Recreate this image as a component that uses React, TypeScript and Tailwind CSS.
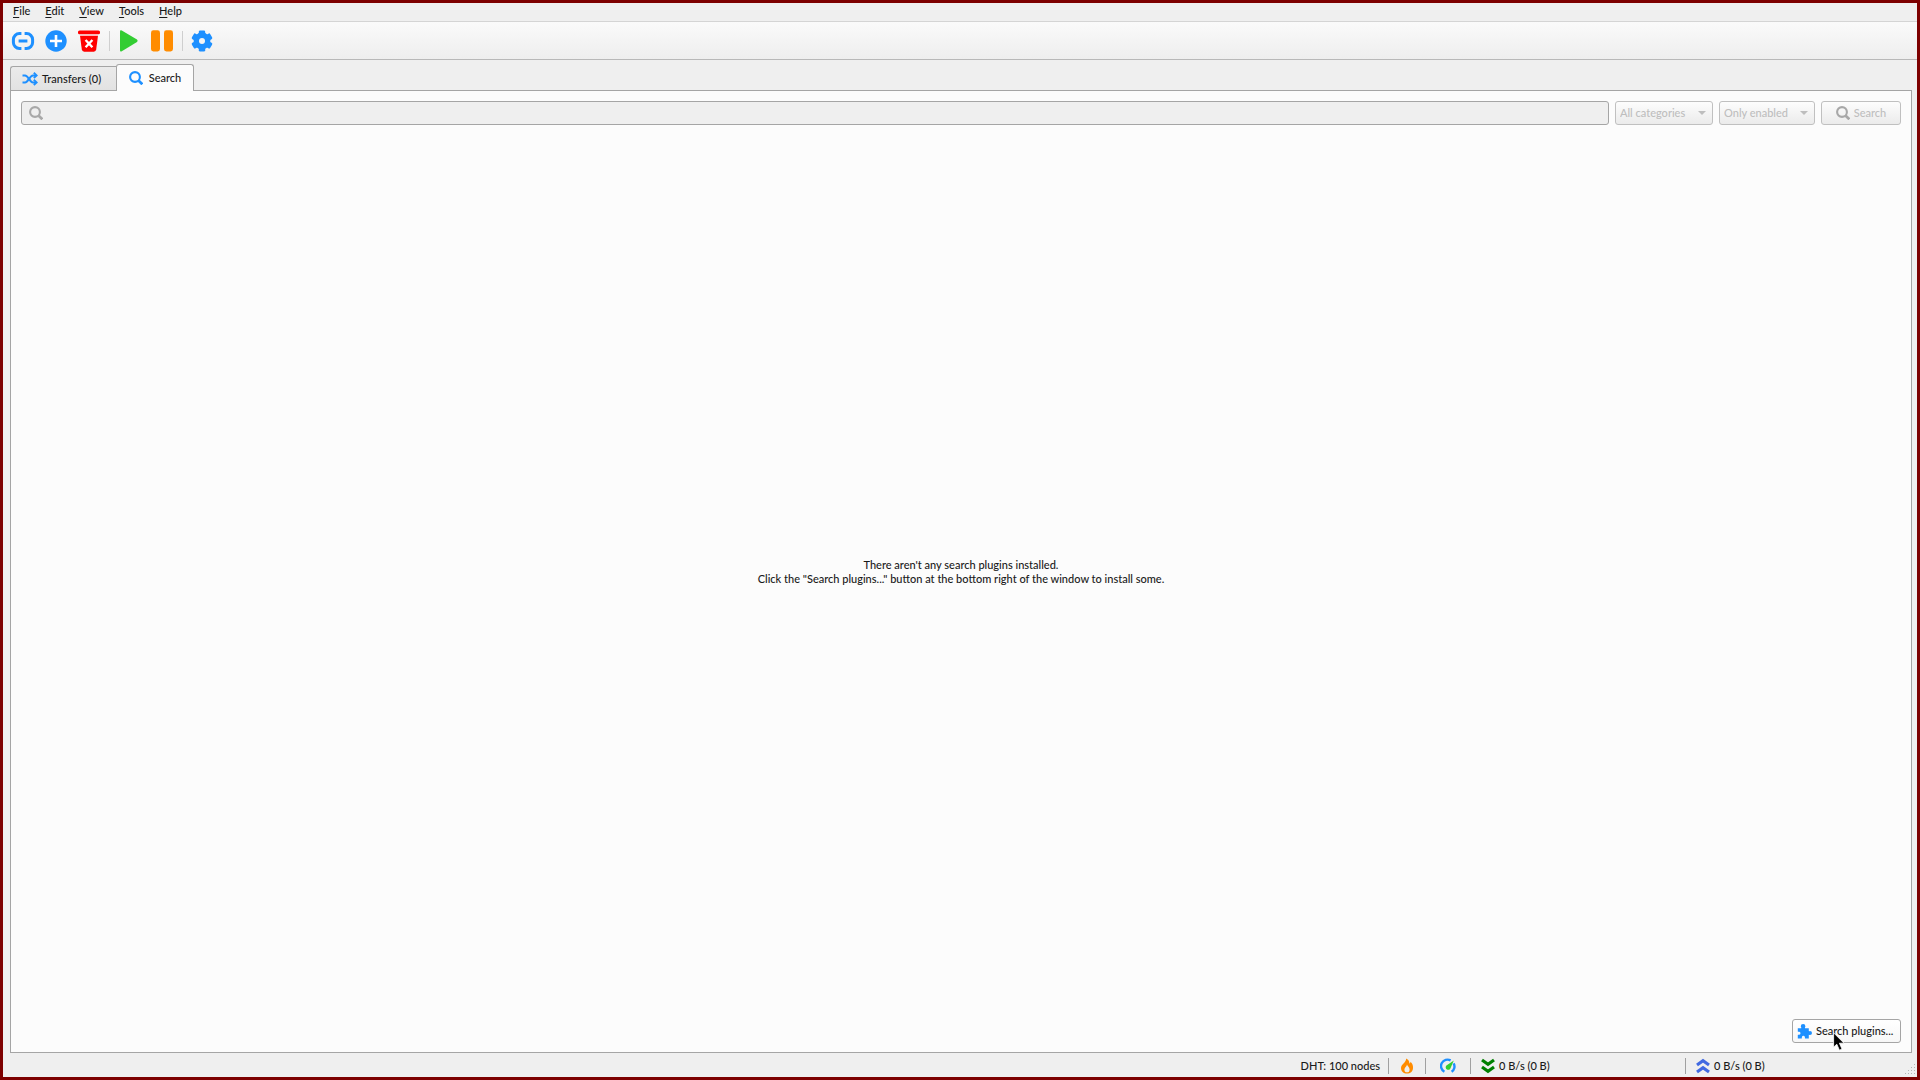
import React from "react";

const menus = ["File", "Edit", "View", "Tools", "Help"];

function SearchIcon({ className }: { className?: string }) {
  return (
    <svg viewBox="0 0 14 14" className={className} fill="none" stroke="currentColor" aria-hidden="true">
      <circle cx="6" cy="6" r="4.9" strokeWidth="2.1" />
      <path d="M9.2 9.2 L13.3 13.3" strokeWidth="2.7" />
    </svg>
  );
}

function LinkIcon() {
  return (
    <svg viewBox="0 0 24 24" className="size-6" fill="none" stroke="#1e90ff" strokeWidth="3" aria-hidden="true">
      <path d="M10.4 4.6 H8.4 A6 6 0 0 0 2.4 10.6 V13.4 A6 6 0 0 0 8.4 19.4 H10.4" />
      <path d="M13.6 4.6 H15.6 A6 6 0 0 1 21.6 10.6 V13.4 A6 6 0 0 1 15.6 19.4 H13.6" />
      <path d="M7.6 12 H16.4" />
    </svg>
  );
}

function AddIcon() {
  return (
    <svg viewBox="0 0 24 24" className="size-6" aria-hidden="true">
      <circle cx="12" cy="12" r="10.7" fill="#1e90ff" />
      <path d="M12 6 V18 M6 12 H18" stroke="#fff" strokeWidth="2.6" />
    </svg>
  );
}

function DeleteIcon() {
  return (
    <svg viewBox="0 0 24 24" className="size-6" aria-hidden="true">
      <rect x="1" y="1.5" width="22" height="3.8" rx="1.6" fill="#f00" />
      <path d="M3 6.8 H21 L19.2 20.6 Q18.9 22.7 16.8 22.7 H7.2 Q5.1 22.7 4.8 20.6 Z" fill="#f00" />
      <path d="M8.6 11 L15.4 18.2 M15.4 11 L8.6 18.2" stroke="#fff" strokeWidth="2.4" />
    </svg>
  );
}

function PlayIcon() {
  return (
    <svg viewBox="0 0 24 24" className="size-6" fill="#32cd32" aria-hidden="true">
      <path d="M3 2.6 Q3 0.6 4.8 1.6 L20 10.6 Q21.4 11.8 20 12.9 L4.8 22.2 Q3 23.2 3 21.2 Z" />
    </svg>
  );
}

function PauseIcon() {
  return (
    <svg viewBox="0 0 24 24" className="size-6" fill="#ff8c00" aria-hidden="true">
      <rect x="1" y="1.3" width="9" height="21.2" rx="2.4" />
      <rect x="14" y="1.3" width="9" height="21.2" rx="2.4" />
    </svg>
  );
}

function GearIcon() {
  return (
    <svg viewBox="0 0 24 24" className="size-6" aria-hidden="true">
      <g fill="#1e90ff">
        <circle cx="12" cy="12" r="8.4" />
        <rect x="8.8" y="1.4" width="6.4" height="21.2" rx="1.4" />
        <rect x="8.8" y="1.4" width="6.4" height="21.2" rx="1.4" transform="rotate(60 12 12)" />
        <rect x="8.8" y="1.4" width="6.4" height="21.2" rx="1.4" transform="rotate(120 12 12)" />
      </g>
      <circle cx="12" cy="12" r="3" fill="#f5f5f5" />
    </svg>
  );
}

function ShuffleIcon() {
  return (
    <svg viewBox="0 0 16 14" className="h-3.5 w-4" fill="none" stroke="#1e90ff" strokeWidth="2" aria-hidden="true">
      <path d="M0.5 3.4 H3 C6.5 3.4 7.5 10.4 11 10.4 H14" />
      <path d="M0.5 10.4 H3 C6.5 10.4 7.5 3.4 11 3.4 H14" />
      <path d="M11.8 0.8 L14.6 3.4 L11.8 6 M11.8 7.8 L14.6 10.4 L11.8 13" strokeWidth="1.9" />
    </svg>
  );
}

function PuzzleIcon() {
  return (
    <svg viewBox="0 0 15 15" className="size-[15px]" fill="#1e90ff" aria-hidden="true">
      <path d="M0.8 4.2 H4.2 C4.6 3.6 3.8 3.1 3.8 2.3 A2.3 2.3 0 0 1 8.4 2.3 C8.4 3.1 7.6 3.6 8 4.2 H11.8 V7 C12.2 7.4 12.5 6.9 13 6.9 A2 2 0 0 1 13 10.9 C12.5 10.9 12.2 10.4 11.8 10.8 V14.6 H8.1 C7.7 14.1 8.1 13.5 7.9 12.9 A1.6 1.6 0 0 0 4.9 12.9 C4.7 13.5 5.1 14.1 4.7 14.6 H0.8 V11 C1.2 10.5 1.8 11 2.3 10.8 A1.6 1.6 0 0 0 2.3 7.7 C1.8 7.5 1.2 8 0.8 7.5 Z" />
    </svg>
  );
}

function FlameIcon() {
  return (
    <svg viewBox="0 0 14 16" className="h-4 w-3.5" aria-hidden="true">
      <path d="M6.2 0.4 C9.4 2 9.3 4.2 9.4 5.6 C10.2 5.2 10.5 4.6 10.5 3.8 C12.6 5.6 13.2 8 13 10.2 C12.7 13.6 10.2 15.6 7 15.6 C3.6 15.6 1 13.4 1 10 C1 6 6 4.8 6.2 0.4 Z" fill="#ff8c00" />
      <path d="M7 6.4 C7.5 8.2 9.6 9.2 9.6 11.4 A2.6 2.9 0 0 1 4.4 11.4 C4.4 9.4 6.8 8.6 7 6.4 Z" fill="#efefef" />
    </svg>
  );
}

function GaugeIcon() {
  return (
    <svg viewBox="0 0 16 16" className="size-4" fill="none" aria-hidden="true">
      <path d="M4.4 13.8 A6.2 6.2 0 0 1 10.6 2.4" stroke="#1e90ff" strokeWidth="2.4" />
      <path d="M13.6 5.4 A6.2 6.2 0 0 1 11.6 13.8" stroke="#1e90ff" strokeWidth="2.4" />
      <path d="M13.8 2.4 L10.6 10 A2.5 2.5 0 1 1 6.4 7.6 Z" fill="#32cd32" />
    </svg>
  );
}

function DoubleChevron({ className }: { className?: string }) {
  return (
    <svg viewBox="0 0 14 16" className={className} fill="none" stroke="currentColor" strokeWidth="3.2" aria-hidden="true">
      <path d="M1 2 L7 6.2 L13 2 M1 9 L7 13.2 L13 9" />
    </svg>
  );
}

function ToolButton({ label, children }: { label: string; children: React.ReactNode }) {
  return (
    <button type="button" aria-label={label} className="flex size-8 items-center justify-center">
      {children}
    </button>
  );
}

function ToolSeparator() {
  return (
    <div className="flex h-5 w-1.5 justify-center">
      <div className="w-px bg-[#cfcfcf]" />
    </div>
  );
}

function Combo({ label, value, className }: { label: string; value: string; className: string }) {
  return (
    <div className={`relative h-6 ${className}`}>
      <select
        disabled
        aria-label={label}
        className="size-full appearance-none rounded-[3px] border border-[#c0c0c0] bg-linear-to-b from-[#fdfdfd] to-[#ebebeb] pl-1 text-[#bebebe] opacity-100"
      >
        <option>{value}</option>
      </select>
      <svg viewBox="0 0 8 4" className="pointer-events-none absolute top-2.5 right-[7px] h-1 w-2" fill="#bebebe" aria-hidden="true">
        <path d="M0 0 H8 L4 4 Z" />
      </svg>
    </div>
  );
}

function ResizeGrip() {
  const dots = [
    [9, 0], [6, 3], [9, 3], [3, 6], [6, 6], [9, 6], [0, 9], [3, 9], [6, 9], [9, 9],
  ];
  return (
    <svg viewBox="0 0 11 11" className="mr-px mb-0.5 size-[11px] self-end" fill="#b4b4b4" aria-hidden="true">
      {dots.map(([x, y]) => (
        <rect key={`${x}-${y}`} x={x} y={y} width="1" height="1" />
      ))}
    </svg>
  );
}

function StatusBar() {
  return (
    <footer className="flex h-6 items-center justify-end pt-px">
      <span className="pr-2">DHT: 100 nodes</span>
      <button type="button" aria-label="Connection status" className="flex h-4 w-[37px] items-center justify-center border-l border-[#a0a0a0]">
        <FlameIcon />
      </button>
      <button type="button" aria-label="Alternative speed limits" className="flex h-4 w-[45px] items-center justify-center border-l border-[#a0a0a0]">
        <GaugeIcon />
      </button>
      <button type="button" className="flex h-4 w-[215px] items-center gap-1 border-l border-[#a0a0a0] pl-2.5">
        <DoubleChevron className="h-4 w-3.5 text-[#008000]" />
        0 B/s (0 B)
      </button>
      <div className="flex h-full w-[232px] items-center justify-between">
        <button type="button" className="flex h-4 items-center gap-1 border-l border-[#a0a0a0] pl-2.5">
          <DoubleChevron className="h-4 w-3.5 rotate-180 text-[#4169e1]" />
          0 B/s (0 B)
        </button>
        <ResizeGrip />
      </div>
    </footer>
  );
}

function SearchPage() {
  return (
    <main className="mr-[5px] ml-[7px] flex flex-1 flex-col border border-[#a5a5a5] bg-[#fcfcfc] px-2.5 pt-2.5 pb-[9px]">
      <div className="flex gap-1.5">
        <div className="relative flex-1">
          <input
            type="text"
            disabled
            aria-label="Search pattern"
            className="block h-6 w-full rounded-[3px] border border-[#a5a5a5] bg-[#efefef] pl-7"
          />
          <SearchIcon className="absolute top-[5px] left-2 size-3.5 text-[#a8a8a8]" />
        </div>
        <Combo label="Category" value="All categories" className="w-[98px]" />
        <Combo label="Plugins" value="Only enabled" className="w-24" />
        <button
          type="button"
          disabled
          className="flex h-6 w-20 items-center justify-center gap-1 rounded-[3px] border border-[#c0c0c0] bg-linear-to-b from-[#fdfdfd] to-[#ebebeb] text-[#bebebe]"
        >
          <SearchIcon className="size-3.5 text-[#a8a8a8]" />
          Search
        </button>
      </div>
      <div className="flex flex-1 items-center justify-center text-center leading-3.5">
        <p>
          There aren't any search plugins installed.
          <br />
          Click the "Search plugins..." button at the bottom right of the window to install some.
        </p>
      </div>
      <div className="flex justify-end">
        <button
          type="button"
          className="relative flex h-6 w-[109px] items-center gap-1 rounded-[3px] border border-[#a5a5a5] bg-linear-to-b from-white to-[#f7f7f7] pl-1"
        >
          <PuzzleIcon />
          Search plugins...
          <svg viewBox="0 0 12 19" className="absolute top-3 left-10 h-[19px] w-3" aria-hidden="true">
            <path d="M0.6 0.8 V15.2 L3.8 12.2 L6.4 18.2 L9 17 L6.4 11.2 H11 Z" fill="#000" stroke="#fff" strokeWidth="0.8" />
          </svg>
        </button>
      </div>
    </main>
  );
}

function App() {
  return (
    <div className="flex min-h-screen flex-col border-3 border-[#7d0000] bg-[#efefef] font-['Lato','Liberation_Sans',sans-serif] text-[11px] leading-4 font-medium text-[#1a1a1a]">
      <nav className="flex h-[19px] items-start gap-[15px] border-b border-[#d4d4d4] px-2.5">
        {menus.map((name) => (
          <button type="button" key={name}>
            <span className="underline underline-offset-2">{name[0]}</span>
            {name.slice(1)}
          </button>
        ))}
      </nav>
      <div className="flex h-[38px] items-center gap-px border-b border-[#b8b8b8] bg-linear-to-b from-[#fafafa] to-[#eeeeee] px-1">
        <ToolButton label="Add torrent link"><LinkIcon /></ToolButton>
        <ToolButton label="Add torrent file"><AddIcon /></ToolButton>
        <ToolButton label="Delete"><DeleteIcon /></ToolButton>
        <ToolSeparator />
        <ToolButton label="Resume"><PlayIcon /></ToolButton>
        <ToolButton label="Pause"><PauseIcon /></ToolButton>
        <ToolSeparator />
        <ToolButton label="Options"><GearIcon /></ToolButton>
      </div>
      <div role="tablist" className="mx-[7px] -mb-px flex items-end pt-1">
        <button
          type="button"
          role="tab"
          aria-selected="false"
          className="flex h-[25px] w-[106px] items-center gap-1 rounded-tl-[3px] border border-r-0 border-[#a5a5a5] bg-linear-to-b from-[#ebebeb] to-[#e2e2e2] pl-[11px]"
        >
          <ShuffleIcon />
          Transfers (0)
        </button>
        <button
          type="button"
          role="tab"
          aria-selected="true"
          className="z-10 flex h-[27px] w-[78px] items-center justify-center gap-1.5 rounded-t-[3px] border border-b-0 border-[#a5a5a5] bg-[#fcfcfc]"
        >
          <SearchIcon className="size-3.5 text-[#1e90ff]" />
          Search
        </button>
      </div>
      <SearchPage />
      <StatusBar />
    </div>
  );
}

export default App;
